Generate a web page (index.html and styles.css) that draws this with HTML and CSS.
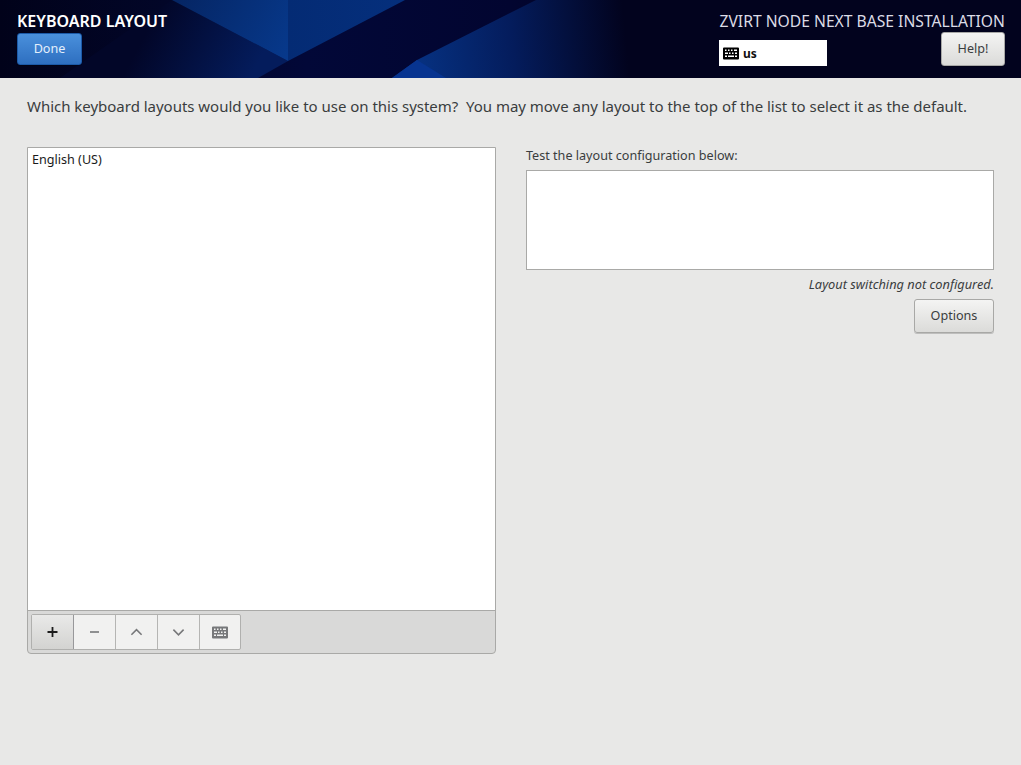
FILE: index.html
```html
<!DOCTYPE html>
<html lang="en">
<head>
<meta charset="utf-8">
<title>Keyboard Layout</title>
<link rel="stylesheet" href="styles.css">
</head>
<body>
<header class="banner">
  <svg class="banner-art" viewBox="0 0 1021 78" preserveAspectRatio="none" aria-hidden="true">
    <defs>
      <linearGradient id="base" x1="0" x2="1" y1="0" y2="0">
        <stop offset="0" stop-color="#01021a"/>
        <stop offset=".16" stop-color="#020628"/>
        <stop offset=".3" stop-color="#020838"/>
        <stop offset=".5" stop-color="#020530"/>
        <stop offset=".62" stop-color="#02031e"/>
        <stop offset="1" stop-color="#02031e"/>
      </linearGradient>
      <linearGradient id="low" gradientUnits="userSpaceOnUse" x1="150" y1="25" x2="250" y2="78">
        <stop offset="0" stop-color="#020628"/>
        <stop offset="1" stop-color="#041c5c"/>
      </linearGradient>
      <linearGradient id="up1" gradientUnits="userSpaceOnUse" x1="175" y1="0" x2="288" y2="60">
        <stop offset="0" stop-color="#052563"/>
        <stop offset="1" stop-color="#07398c"/>
      </linearGradient>
      <linearGradient id="up2" gradientUnits="userSpaceOnUse" x1="288" y1="0" x2="400" y2="0">
        <stop offset="0" stop-color="#042b74"/>
        <stop offset="1" stop-color="#052f7c"/>
      </linearGradient>
      <linearGradient id="ray" gradientUnits="userSpaceOnUse" x1="420" y1="50" x2="625" y2="30">
        <stop offset="0" stop-color="#06307f"/>
        <stop offset=".45" stop-color="#041c5c"/>
        <stop offset="1" stop-color="#02031e"/>
      </linearGradient>
    </defs>
    <rect width="1021" height="78" fill="url(#base)"/>
    <polygon points="172,0 288,61 258,78 60,78" fill="url(#low)"/>
    <polygon points="172,0 288,0 288,61" fill="url(#up1)"/>
    <polygon points="288,0 405,0 288,61" fill="url(#up2)"/>
    <polygon points="417,60 536,0 640,0 640,78 392,78" fill="url(#ray)"/>
    <polygon points="392,78 417,60 446,78" fill="#073490"/>
  </svg>
  <div class="banner-left">
    <h1 class="spoke-title">KEYBOARD LAYOUT</h1>
    <button class="btn btn-done">Done</button>
  </div>
  <div class="banner-right">
    <div class="product">ZVIRT NODE NEXT BASE INSTALLATION</div>
    <div class="banner-controls">
      <div class="layout-indicator">
        <svg class="kbd-icon" viewBox="0 0 16 12" aria-hidden="true">
          <path fill="#000" fill-rule="evenodd" d="M1 0h14a1 1 0 0 1 1 1v10a1 1 0 0 1-1 1H1a1 1 0 0 1-1-1V1a1 1 0 0 1 1-1zM2 2v1.500h1.500V2zM5 2v1.500h1.500V2zM8 2v1.500h1.500V2zM11 2v1.500h3V2zM2 5v1.500h3V5zM6 5v1.500h1.500V5zM9 5v1.500h1.500V5zM12 5v1.500h2V5zM2 8v1.500h2V8zM5 8v1.500h6V8zM12 8v1.500h2V8z"/>
        </svg>
        <span>us</span>
      </div>
      <button class="btn btn-help">Help!</button>
    </div>
  </div>
</header>
<main class="content">
  <p class="question">Which keyboard layouts would you like to use on this system?&nbsp; You may move any layout to the top of the list to select it as the default.</p>
  <div class="columns">
    <section class="list-panel">
      <div class="list"><div class="list-row">English (US)</div></div>
      <div class="toolbar">
        <div class="tool-group">
          <button class="tool tool-active" aria-label="Add">
            <svg viewBox="0 0 12 12"><path d="M6 1v10M1 6h10" stroke="#1c1c1c" stroke-width="1.800" fill="none"/></svg>
          </button>
          <button class="tool" aria-label="Remove">
            <svg viewBox="0 0 12 12"><path d="M1.500 6h9" stroke="#77787a" stroke-width="1.600" fill="none"/></svg>
          </button>
          <button class="tool" aria-label="Move up">
            <svg viewBox="0 0 14 12"><path d="M1.500 9L7 3.500 12.500 9" stroke="#77787a" stroke-width="1.700" fill="none"/></svg>
          </button>
          <button class="tool" aria-label="Move down">
            <svg viewBox="0 0 14 12"><path d="M1.500 3.500L7 9l5.500-5.500" stroke="#77787a" stroke-width="1.700" fill="none"/></svg>
          </button>
          <button class="tool tool-last" aria-label="Preview">
            <svg class="tool-kbd" viewBox="0 0 16 12"><path fill="#77787a" fill-rule="evenodd" d="M1 0h14a1 1 0 0 1 1 1v10a1 1 0 0 1-1 1H1a1 1 0 0 1-1-1V1a1 1 0 0 1 1-1zM2 2v1.500h1.500V2zM5 2v1.500h1.500V2zM8 2v1.500h1.500V2zM11 2v1.500h3V2zM2 5v1.500h3V5zM6 5v1.500h1.500V5zM9 5v1.500h1.500V5zM12 5v1.500h2V5zM2 8v1.500h2V8zM5 8v1.500h6V8zM12 8v1.500h2V8z"/></svg>
          </button>
        </div>
      </div>
    </section>
    <section class="test-panel">
      <label class="test-label" for="test">Test the layout configuration below:</label>
      <textarea class="test-box" id="test"></textarea>
      <div class="status">Layout switching not configured.</div>
      <button class="btn btn-options">Options</button>
    </section>
  </div>
</main>
</body>
</html>
```
FILE: styles.css
```css
* { box-sizing: border-box; }
html, body { margin: 0; height: 100%; }
body {
  background: #e8e8e7;
  color: #3a3d3e;
  font-family: "Noto Sans", "Open Sans", sans-serif;
  font-size: 12.6px;
  overflow: hidden;
}
.banner {
  position: relative;
  height: 78px;
  display: flex;
  justify-content: space-between;
  padding: 0 16px 0 17px;
  background: #02031e;
}
.banner-art {
  position: absolute;
  inset: 0;
  width: 100%;
  height: 100%;
}
.banner-left, .banner-right { position: relative; display: flex; flex-direction: column; }
.banner-right { align-items: flex-end; }
.spoke-title {
  margin: 11px 0 2px;
  font-size: 16px;
  line-height: 20px;
  font-weight: 600;
  color: #fff;
}
.product {
  margin-top: 11px;
  font-size: 15.66px;
  line-height: 20px;
  color: #dcdce6;
}
.banner-controls {
  display: flex;
  align-items: flex-end;
  gap: 114px;
  margin-top: 1px;
}
.layout-indicator {
  width: 108px;
  height: 26px;
  display: flex;
  align-items: center;
  gap: 4px;
  padding-left: 4px;
  background: #fff;
  color: #111;
  font-size: 12px;
  font-weight: 700;
}
.kbd-icon { width: 16px; height: 13px; }
.btn {
  font: inherit;
  border-radius: 3px;
  padding: 0 0 2px;
  color: #3a3d3e;
  border: 1px solid #a8a8a6;
  background: linear-gradient(#f4f4f3, #dbdbd9);
  box-shadow: 0 1px 0 rgba(0, 0, 0, .18);
}
.btn-done {
  width: 65px;
  height: 32px;
  color: #e4effc;
  border-color: #1c5aa8;
  background: linear-gradient(#4a90dc, #2e6fc0);
}
.btn-help { width: 64px; height: 34px; }
.content { padding: 0 27px; }
.question {
  margin: 17px 0 0;
  font-size: 15px;
  line-height: 22px;
  letter-spacing: -0.02px;
  white-space: nowrap;
}
.columns {
  display: flex;
  gap: 30px;
  margin-top: 30px;
}
.list-panel {
  width: 469px;
  height: 507px;
  display: flex;
  flex-direction: column;
  border: 1px solid #a9a9a7;
  border-radius: 0 0 4px 4px;
  background: #d9d9d8;
}
.list { flex: 1; background: #fff; border-bottom: 1px solid #a9a9a7; }
.list-row { padding: 3px 4px; line-height: 17px; color: #1a1a1a; }
.toolbar { height: 42px; padding: 3px; }
.tool-group {
  display: flex;
  height: 36px;
  width: 210px;
  border: 1px solid #b0b0ae;
  border-radius: 2px;
  background: #f1f1f0;
}
.tool {
  flex: none;
  width: 42px;
  padding: 0;
  border: 0;
  border-right: 1px solid #b5b5b3;
  background: transparent;
  display: flex;
  align-items: center;
  justify-content: center;
}
.tool-active { background: linear-gradient(#e9e9e8, #d3d3d1); border-right-color: #98989a; }
.tool-last { width: 40px; border-right: 0; }
.tool svg { width: 13px; height: 12px; }
.tool svg.tool-kbd { width: 16px; height: 13px; }
.test-panel {
  width: 468px;
  display: flex;
  flex-direction: column;
  align-items: stretch;
}
.test-label { line-height: 18px; }
.test-box {
  display: block;
  height: 100px;
  margin-top: 5px;
  border: 1px solid #a9a9a7;
  background: #fff;
  resize: none;
  outline: none;
}
.status {
  margin-top: 5px;
  font-size: 12.8px;
  line-height: 18px;
  font-style: italic;
  text-align: right;
}
.btn-options {
  align-self: flex-end;
  width: 80px;
  height: 34px;
  margin-top: 6px;
}
```
